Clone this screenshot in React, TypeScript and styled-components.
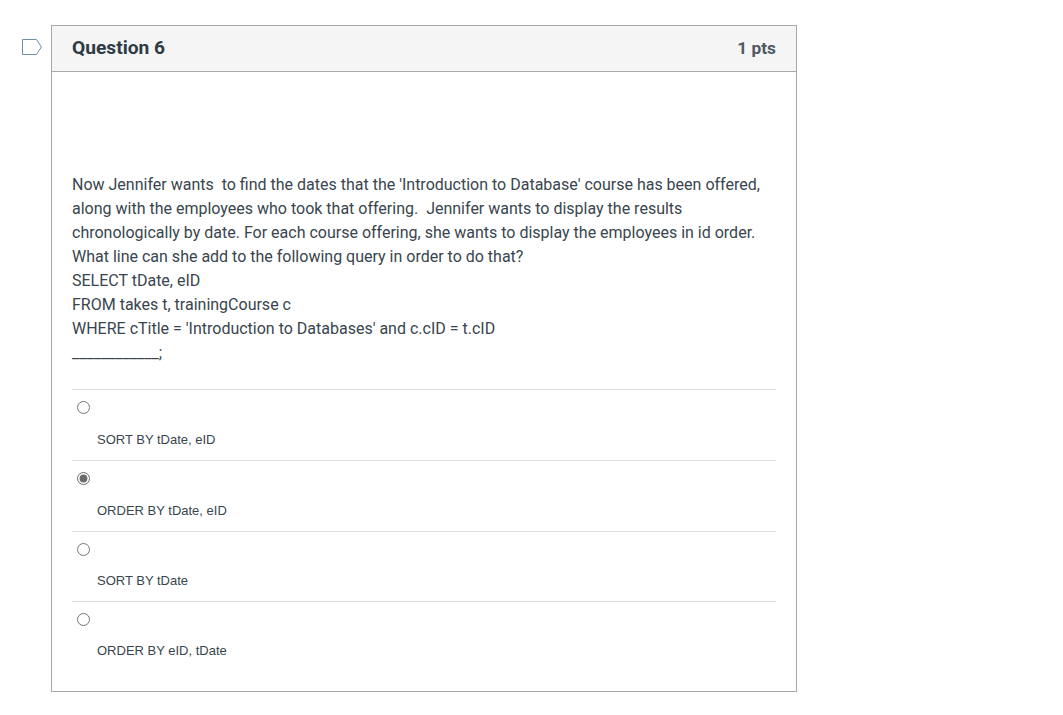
import React from "react";
import styled, { createGlobalStyle } from "styled-components";

const Global = createGlobalStyle`
  html, body { margin: 0; padding: 0; background: #fff; }
  body { font-family: Roboto, "Liberation Sans", sans-serif; color: #2d3b45; }
`;

const Page = styled.div`
  display: flex;
  align-items: flex-start;
  gap: 9px;
  padding: 25px 0 0 22px;
  width: 1063px;
  height: 715px;
  box-sizing: border-box;
  overflow: hidden;
`;

const Marker = styled.svg`
  display: block;
  flex: none;
  width: 20px;
  height: 16px;
  margin-top: 14px;
`;

const Card = styled.section`
  width: 746px;
  height: 667px;
  box-sizing: border-box;
  border: 1px solid #a9a9a9;
`;

const Header = styled.header`
  display: flex;
  align-items: center;
  justify-content: space-between;
  height: 46px;
  box-sizing: border-box;
  padding: 0 20px 2px;
  background: #f5f5f5;
  border-bottom: 1px solid #a9a9a9;
`;

const Title = styled.h2`
  margin: 0;
  font-size: 19.2px;
  font-weight: 700;
  color: #2d3b45;
`;

const Points = styled.div`
  font-size: 17.3px;
  font-weight: 700;
  color: #4d5a63;
`;

const Body = styled.div`
  padding: 101px 20px 0;
`;

const Prompt = styled.div`
  font-size: 16px;
  line-height: 24px;
  color: #38454e;
  white-space: pre-wrap;
`;

const Answers = styled.div`
  margin-top: 24px;
`;

const Answer = styled.label<{ $compact: boolean }>`
  display: block;
  height: ${(p) => (p.$compact ? 70 : 71)}px;
  box-sizing: border-box;
  border-top: 1px solid #dcdfe1;
`;

const RadioRow = styled.div`
  display: flex;
  align-items: center;
  height: 35px;
  padding-left: 5px;
`;

const Radio = styled.input`
  margin: 0;
  width: 13px;
  height: 13px;
  accent-color: #6b6b6b;
`;

const AnswerText = styled.div<{ $compact: boolean }>`
  padding: ${(p) => (p.$compact ? 6 : 7)}px 0 0 25px;
  font-family: "Liberation Sans", Arial, sans-serif;
  font-size: 13px;
  line-height: 16px;
  color: #38454e;
`;

const answers = [
  { text: "SORT BY tDate, eID", checked: false, compact: false },
  { text: "ORDER BY tDate, eID", checked: true, compact: false },
  { text: "SORT BY tDate", checked: false, compact: true },
  { text: "ORDER BY eID, tDate", checked: false, compact: true },
];

const lines = [
  "Now Jennifer wants  to find the dates that the 'Introduction to Database' course has been offered,",
  "along with the employees who took that offering.  Jennifer wants to display the results",
  "chronologically by date. For each course offering, she wants to display the employees in id order.",
  "What line can she add to the following query in order to do that?",
  "SELECT tDate, eID",
  "FROM takes t, trainingCourse c",
  "WHERE cTitle = 'Introduction to Databases' and c.cID = t.cID",
  "____________;",
];

export default function App() {
  return (
    <>
      <Global />
      <Page>
        <Marker viewBox="0 0 20 16" aria-hidden="true">
          <path d="M0.5 0.5H14.5L19.4 8L14.5 15.5H0.5Z" fill="none" stroke="#6d8fa0" strokeWidth="1" />
        </Marker>
        <Card>
          <Header>
            <Title>Question 6</Title>
            <Points>1 pts</Points>
          </Header>
          <Body>
            <Prompt>{lines.join("\n")}</Prompt>
            <Answers>
              {answers.map((a) => (
                <Answer key={a.text} $compact={a.compact}>
                  <RadioRow>
                    <Radio type="radio" name="q6" defaultChecked={a.checked} />
                  </RadioRow>
                  <AnswerText $compact={a.compact}>{a.text}</AnswerText>
                </Answer>
              ))}
            </Answers>
          </Body>
        </Card>
      </Page>
    </>
  );
}
